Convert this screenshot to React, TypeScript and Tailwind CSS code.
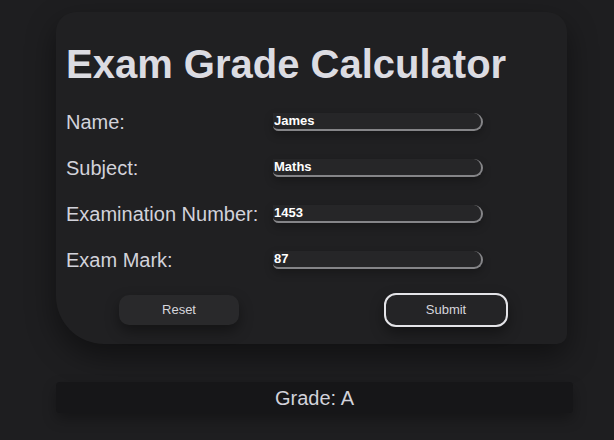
import React from 'react';

const FIELDS = [
  { label: 'Name:', value: 'James' },
  { label: 'Subject:', value: 'Maths' },
  { label: 'Examination Number:', value: '1453' },
  { label: 'Exam Mark:', value: '87' },
];

export default function App() {
  return (
    <div
      className="min-h-[440px] w-full bg-[#1e1e20] pt-[12px] pl-[56px]"
      style={{ fontFamily: '"Liberation Sans", Arial, sans-serif' }}
    >
      {/* Calculator card */}
      <div className="w-[511px] h-[332px] bg-[#202022] rounded-tl-[20px] rounded-tr-[20px] rounded-br-[10px] rounded-bl-[48px] shadow-[0_12px_30px_rgba(0,0,0,0.45)] pl-[10px] pt-[28px]">
        <h1 className="text-[40px] leading-[48px] font-bold text-[#dcdce2]">Exam Grade Calculator</h1>

        <div className="mt-[25px] flex flex-col gap-[28px]">
          {FIELDS.map((f) => (
            <div key={f.label} className="flex items-center h-[18px]">
              <span className="w-[207px] text-[20px] leading-[18px] text-[#d2d2da]">{f.label}</span>
              <input
                readOnly
                value={f.value}
                className="w-[210px] h-[18px] bg-[#262628] text-white text-[13px] font-bold pl-[1px] outline-none border-b-2 border-r-2 border-[#858588] rounded-bl-[6px] rounded-br-[10px] rounded-tr-[10px] shadow-[0_4px_8px_rgba(0,0,0,0.25)]"
                style={{ fontFamily: '"Liberation Sans", Arial, sans-serif' }}
              />
            </div>
          ))}
        </div>

        <div className="mt-[24px] flex items-center">
          <button className="ml-[53px] w-[120px] h-[30px] rounded-[10px] bg-[#29292b] text-[13px] text-[#d6d6dc] shadow-[0_6px_14px_rgba(0,0,0,0.4)]">
            Reset
          </button>
          <button className="ml-[145px] w-[124px] h-[34px] rounded-[12px] border-2 border-[#e4e4e8] bg-[#242426] text-[13px] text-[#d6d6dc] shadow-[0_6px_14px_rgba(0,0,0,0.4)]">
            Submit
          </button>
        </div>
      </div>

      {/* Result bar */}
      <div className="mt-[38px] w-[517px] h-[31px] rounded-[4px] bg-[#161618] shadow-[0_6px_14px_rgba(0,0,0,0.3)] flex items-center justify-center text-[20px] text-[#d2d2da]">
        Grade: A
      </div>
    </div>
  );
}
